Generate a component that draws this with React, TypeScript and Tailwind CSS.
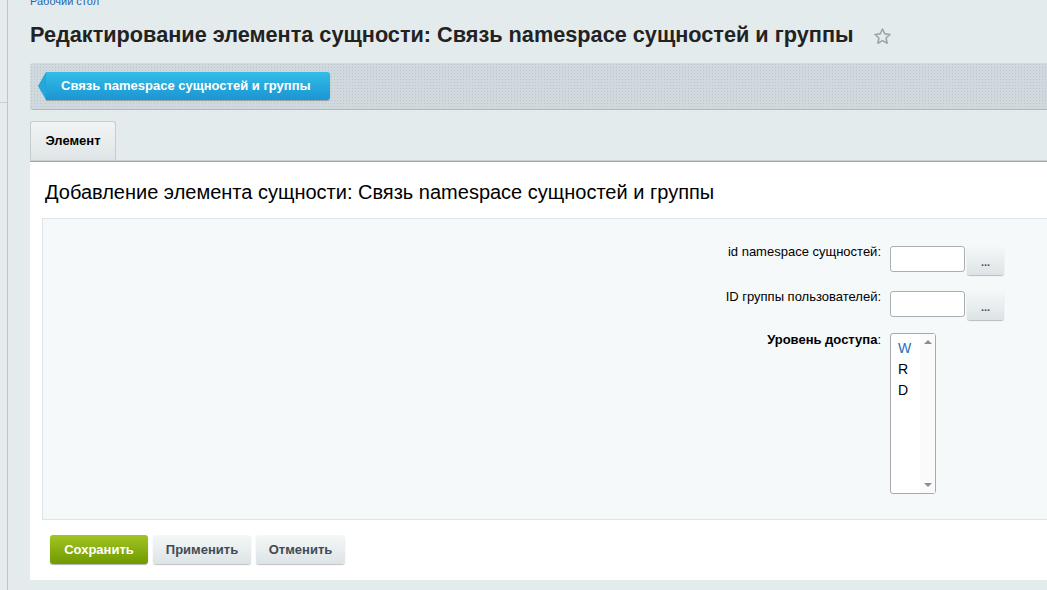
import React from "react";

function Star() {
  return (
    <svg width="19" height="19" viewBox="0 0 24 24" fill="none" stroke="#9aa5ad" strokeWidth="2" strokeLinejoin="round">
      <path d="M12 2.5l2.9 6.2 6.6.7-5 4.5 1.4 6.6L12 17.2l-5.9 3.3 1.4-6.6-5-4.5 6.6-.7z" />
    </svg>
  );
}

const grayBtn =
  "rounded-[3px] bg-gradient-to-b from-[#f6f8f8] to-[#dce3e6] shadow-[0_1px_1px_rgba(0,0,0,0.25)] font-bold text-[#3f4b54]";

export default function App() {
  return (
    <div
      className="relative w-[1047px] h-[590px] overflow-hidden bg-[#e4ebed]"
      style={{ fontFamily: '"Liberation Sans", Arial, sans-serif' }}
    >
      {/* left rail */}
      <div className="absolute left-0 top-0 h-full w-[8px] border-r border-[#b8c7d2] bg-[#e6eced]">
        <div className="mt-[102px] h-px bg-[#c5d0d6]" />
      </div>

      <div className="pl-[30px]">
        <div className="-mt-[6px] text-[11px] text-[#2067b0] leading-[14px]">Рабочий стол</div>

        <div className="flex items-center h-[44px] mt-[5px]">
          <h1 className="text-[21.7px] font-bold text-[#222]">
            Редактирование элемента сущности: Связь namespace сущностей и группы
          </h1>
          <span className="ml-[19px] mt-[2px]">
            <Star />
          </span>
        </div>

        {/* context bar */}
        <div className="mt-[6px] h-[47px] rounded-l-[3px] border-b border-[#aeb9bf] bg-[#d0d9dd] bg-[radial-gradient(#bcc6cb_0.6px,transparent_0.8px)] bg-[length:3px_3px] flex items-center pl-[8px]">
          <div className="relative flex items-center h-[28px]">
            <div className="w-0 h-0 border-y-[14px] border-y-transparent border-r-[8px] border-r-[#24a8dc]" />
            <div className="h-[28px] pl-[15px] pr-[19px] flex items-center rounded-r-[3px] bg-gradient-to-b from-[#33bde6] to-[#1b95d3] shadow-[0_1px_1px_rgba(0,0,0,0.25)] text-white text-[13px] font-bold">
              Связь namespace сущностей и группы
            </div>
          </div>
        </div>

        {/* tabs */}
        <div className="mt-[11px] flex">
          <div className="h-[39px] w-[86px] rounded-t-[3px] border border-b-0 border-[#c5cdd1] bg-gradient-to-b from-[#f1f4f4] to-[#dfe5e7] flex items-center justify-center text-[13px] font-bold text-[#000]">
            Элемент
          </div>
        </div>

        {/* panel */}
        <div className="bg-white border-t border-[#c9d1d5] h-[420px]">
          <div className="border-t border-[#9fa9ae]" />
          <div className="pl-[15px] pt-[18px] text-[20px] text-[#000] leading-[24px]">
            Добавление элемента сущности: Связь namespace сущностей и группы
          </div>

          <div className="mt-[14px] ml-[12px] h-[302px] border border-r-0 border-[#dbe5ea] bg-[#f5f9f9] pt-[27px]">
            <div className="flex items-start h-[45px]">
              <div className="w-[847px] text-right pr-[9px] text-[13px] leading-[14px] -mt-[1px] text-[#000]">id namespace сущностей:</div>
              <div className="w-[75px] h-[26px] rounded-[3px] border border-[#a9b0b4] bg-white" />
              <button className={`ml-[2px] w-[37px] h-[29px] pt-[3px] text-[11px] leading-none ${grayBtn}`}>...</button>
            </div>
            <div className="flex items-start h-[42px]">
              <div className="w-[847px] text-right pr-[9px] text-[13px] leading-[14px] -mt-[1px] text-[#000]">ID группы пользователей:</div>
              <div className="w-[75px] h-[26px] rounded-[3px] border border-[#a9b0b4] bg-white" />
              <button className={`ml-[2px] w-[37px] h-[29px] pt-[3px] text-[11px] leading-none ${grayBtn}`}>...</button>
            </div>
            <div className="flex items-start">
              <div className="w-[847px] text-right pr-[9px] text-[13px] leading-[14px] font-bold text-[#000]">
                Уровень доступа<span className="font-normal">:</span>
              </div>
              <div className="w-[46px] h-[161px] rounded-[3px] border border-[#a5a9ab] bg-white flex">
                <div className="flex-1 pl-[7px] pt-[4px] text-[14px] leading-[21px] text-[#000]">
                  <div className="text-[#1f6fb8]">W</div>
                  <div>R</div>
                  <div>D</div>
                </div>
                <div className="w-[15px] bg-[#fafafa] flex flex-col items-center justify-between py-[6px]">
                  <div className="w-0 h-0 border-x-[4px] border-x-transparent border-b-[4px] border-b-[#8e8e8e]" />
                  <div className="w-0 h-0 border-x-[4px] border-x-transparent border-t-[4px] border-t-[#8e8e8e]" />
                </div>
              </div>
            </div>
          </div>

          <div className="mt-[15px] ml-[20px] flex gap-[5px]">
            <button className="h-[29px] w-[98px] rounded-[3px] bg-gradient-to-b from-[#a2c520] to-[#6f9a00] shadow-[0_1px_1px_rgba(0,0,0,0.3)] text-[13px] font-bold text-white">
              Сохранить
            </button>
            <button className={`h-[29px] w-[98px] text-[13px] ${grayBtn}`}>Применить</button>
            <button className={`h-[29px] w-[89px] text-[13px] ${grayBtn}`}>Отменить</button>
          </div>
        </div>
      </div>
    </div>
  );
}
